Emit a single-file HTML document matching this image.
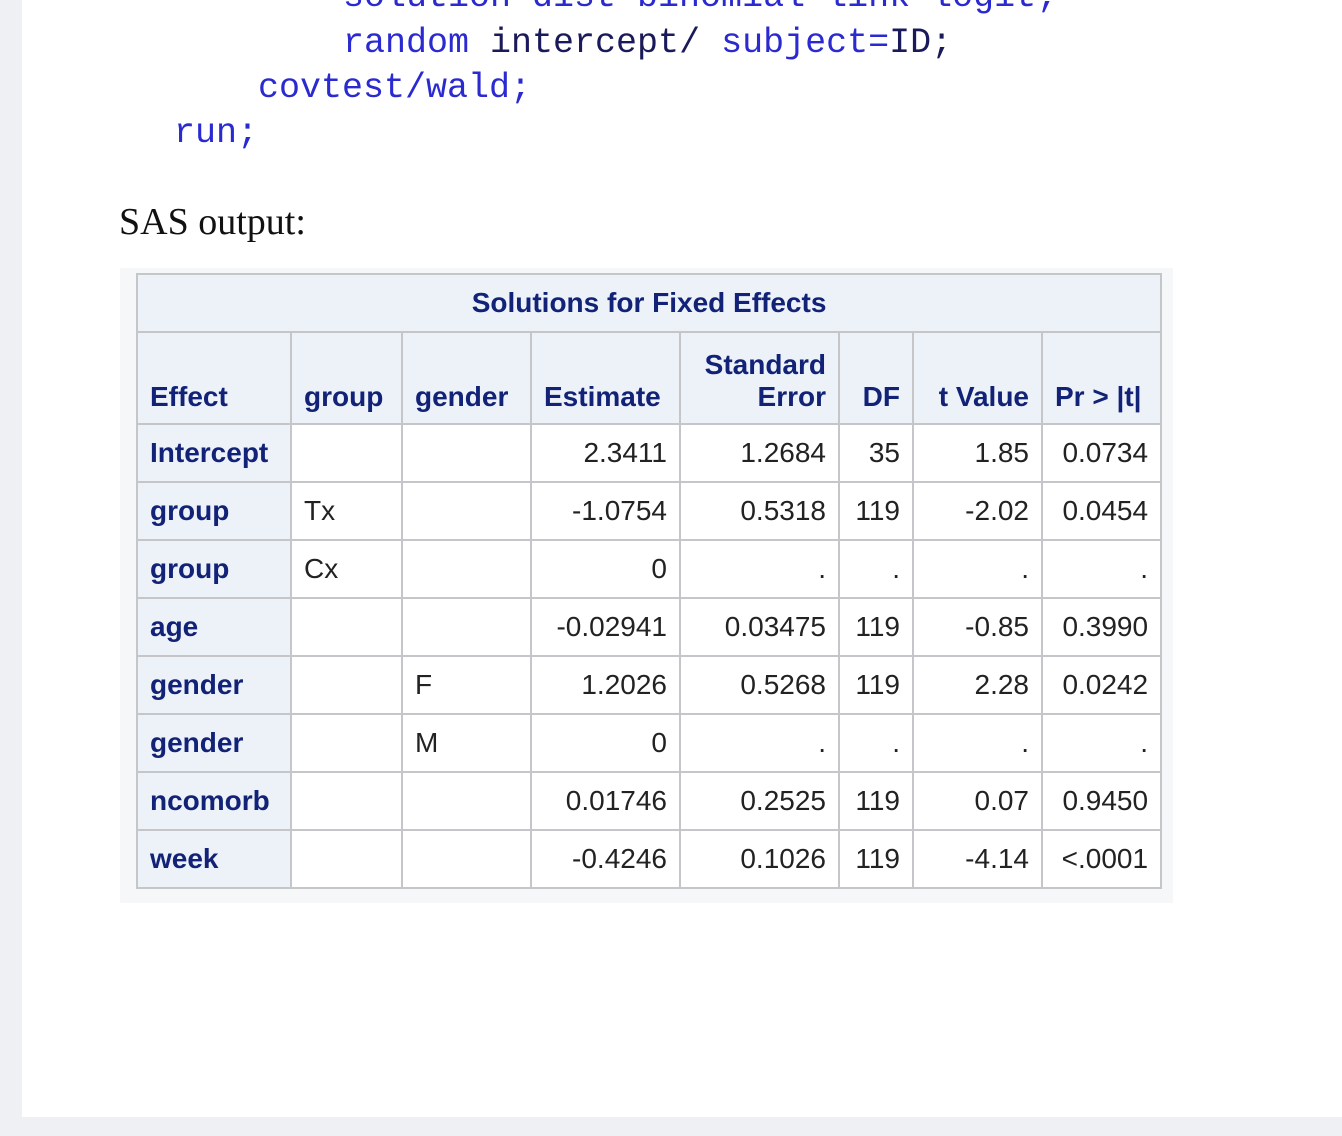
<!DOCTYPE html>
<html><head><meta charset="utf-8"><style>
body{margin:0;width:1342px;height:1136px;background:#fff;position:relative;overflow:hidden;font-family:"Liberation Sans",sans-serif}
.ls{position:absolute;left:0;top:0;width:22px;height:1136px;background:#eff0f3}
.bs{position:absolute;left:22px;top:1117px;width:1320px;height:19px;background:#eff0f3}
.code{position:absolute;font-family:"Liberation Mono",monospace;font-size:35px;color:#1a1a5a;white-space:pre;line-height:1}
.k{color:#2a2ad0}
.sas{position:absolute;left:119px;top:200px;font-family:"Liberation Serif",serif;font-size:38px;color:#111}
.box{position:absolute;left:120px;top:268px;width:1053px;height:635px;background:#f6f7f9}
table{position:absolute;left:136px;top:273px;border-collapse:collapse;font-size:28px;table-layout:fixed;width:1024px}
tr{height:58px}
td,th{border:2px solid #c4c6c9;padding:0 12px;color:#222;background:#fff;overflow:hidden;white-space:nowrap}
th{background:#edf2f9;color:#112277;font-weight:bold;text-align:left}
.r{text-align:right}
.t th{text-align:center}
.d{vertical-align:bottom;padding-bottom:10px}
</style></head><body>
<div class="ls"></div><div class="bs"></div>
<div class="code" style="left:343px;top:-20px"><span class="k">solution dist=binomial link=logit;</span></div>
<div class="code" style="left:343px;top:26px"><span class="k">random</span> intercept/ <span class="k">subject=</span>ID;</div>
<div class="code" style="left:258px;top:71px"><span class="k">covtest/wald;</span></div>
<div class="code" style="left:174px;top:116px"><span class="k">run;</span></div>
<div class="sas">SAS output:</div>
<div class="box"></div>
<table>
<colgroup><col style="width:154px"><col style="width:111px"><col style="width:129px"><col style="width:149px"><col style="width:159px"><col style="width:74px"><col style="width:129px"><col style="width:119px"></colgroup>
<tr class="t"><th colspan="8">Solutions for Fixed Effects</th></tr>
<tr style="height:92px">
<th class="d">Effect</th><th class="d">group</th><th class="d">gender</th><th class="d">Estimate</th><th class="d r">Standard<br>Error</th><th class="d r">DF</th><th class="d r">t Value</th><th class="d">Pr &gt; |t|</th></tr>
<tr><th>Intercept</th><td></td><td></td><td class="r">2.3411</td><td class="r">1.2684</td><td class="r">35</td><td class="r">1.85</td><td class="r">0.0734</td></tr>
<tr><th>group</th><td>Tx</td><td></td><td class="r">-1.0754</td><td class="r">0.5318</td><td class="r">119</td><td class="r">-2.02</td><td class="r">0.0454</td></tr>
<tr><th>group</th><td>Cx</td><td></td><td class="r">0</td><td class="r">.</td><td class="r">.</td><td class="r">.</td><td class="r">.</td></tr>
<tr><th>age</th><td></td><td></td><td class="r">-0.02941</td><td class="r">0.03475</td><td class="r">119</td><td class="r">-0.85</td><td class="r">0.3990</td></tr>
<tr><th>gender</th><td></td><td>F</td><td class="r">1.2026</td><td class="r">0.5268</td><td class="r">119</td><td class="r">2.28</td><td class="r">0.0242</td></tr>
<tr><th>gender</th><td></td><td>M</td><td class="r">0</td><td class="r">.</td><td class="r">.</td><td class="r">.</td><td class="r">.</td></tr>
<tr><th>ncomorb</th><td></td><td></td><td class="r">0.01746</td><td class="r">0.2525</td><td class="r">119</td><td class="r">0.07</td><td class="r">0.9450</td></tr>
<tr><th>week</th><td></td><td></td><td class="r">-0.4246</td><td class="r">0.1026</td><td class="r">119</td><td class="r">-4.14</td><td class="r">&lt;.0001</td></tr>
</table>
</body></html>
